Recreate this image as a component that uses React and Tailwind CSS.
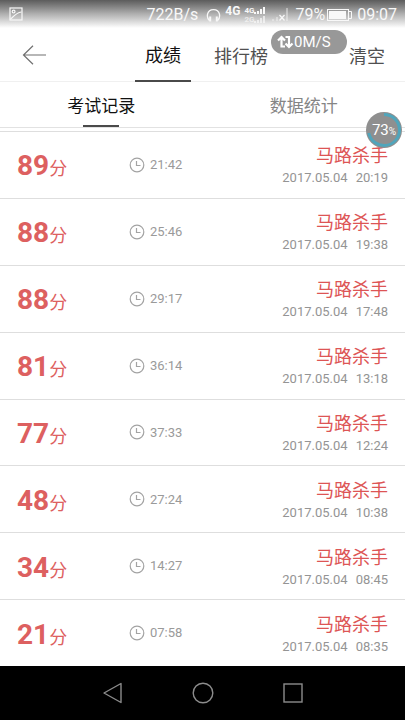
import React, { useState } from 'react';

const records = [
  { score: 89, duration: '21:42', date: '2017.05.04', time: '20:19' },
  { score: 88, duration: '25:46', date: '2017.05.04', time: '19:38' },
  { score: 88, duration: '29:17', date: '2017.05.04', time: '17:48' },
  { score: 81, duration: '36:14', date: '2017.05.04', time: '13:18' },
  { score: 77, duration: '37:33', date: '2017.05.04', time: '12:24' },
  { score: 48, duration: '27:24', date: '2017.05.04', time: '10:38' },
  { score: 34, duration: '14:27', date: '2017.05.04', time: '08:45' },
  { score: 21, duration: '07:58', date: '2017.05.04', time: '08:35' },
];

const PictureIcon = () => (
  <svg width="14" height="14" viewBox="0 0 14 14" fill="none" stroke="currentColor" strokeWidth="1.2">
    <rect x="1" y="1" width="12" height="12" />
    <circle cx="4.6" cy="4.6" r="1.4" />
    <path d="M1.5 12 C4 11 5.5 6 12.5 5" />
  </svg>
);

const HeadphoneIcon = () => (
  <svg width="15" height="15" viewBox="0 0 15 15" fill="none" stroke="currentColor" strokeWidth="1.3">
    <path d="M3.6 12.8 C0 9.5 0.6 1.6 7.5 1.6 C14.4 1.6 15 9.5 11.4 12.8" />
    <path d="M4.2 8.6 V13.4 M10.8 8.6 V13.4" strokeWidth="2" />
  </svg>
);

const SignalIcon = () => (
  <svg width="12" height="18" viewBox="0 0 12 18" fill="currentColor">
    <path d="M0 6h2v2H0zM3 5h2v3H3zM6 3h2v5H6zM9 1h2v7H9z" />
    <path d="M0 15h2v2H0zM3 14h2v3H3zM6 12h2v5H6zM9 10h2v7H9z" opacity="0.7" />
  </svg>
);

const NoSignalIcon = () => (
  <svg width="17" height="14" viewBox="0 0 17 14" fill="currentColor">
    <path d="M0 11h2v2H0zM4 9h2v4H4zM14 0h2v13h-2z" opacity="0.4" />
    <path d="M7.5 7 L12.5 12.5 M12.5 7 L7.5 12.5" stroke="currentColor" strokeWidth="1.3" />
  </svg>
);

const BatteryIcon = () => (
  <svg width="26" height="13" viewBox="0 0 26 13" fill="none" stroke="currentColor">
    <rect x="0.5" y="0.5" width="21" height="11" />
    <rect x="2" y="2" width="17" height="8" fill="currentColor" stroke="none" />
    <path d="M22 2.5 H24.5 V9.5 H22" />
  </svg>
);

const StatusBar = () => (
  <div className="flex h-7 items-center justify-between bg-linear-to-b from-[#5c5c5c] via-[#b0b0b0] to-white pr-2 pl-[9px] text-base text-[#f8f8f8]">
    <PictureIcon />
    <div className="flex items-center pt-[2px]">
      <span className="mr-2">722B/s</span>
      <HeadphoneIcon />
      <span className="ml-1 self-start pt-[2px] text-xs leading-3 font-bold">4G</span>
      <span className="ml-1 flex flex-col text-[8px] leading-[9px] font-bold">
        <span>4G</span>
        <span className="opacity-70">2G</span>
      </span>
      <SignalIcon />
      <span className="mr-[6px] ml-[6px]">
        <NoSignalIcon />
      </span>
      <span className="mr-[2px]">79%</span>
      <BatteryIcon />
      <span className="ml-1">09:07</span>
    </div>
  </div>
);

const ClockIcon = () => (
  <svg width="16" height="16" viewBox="0 0 16 16" fill="none" stroke="#a3a3a3" strokeWidth="1.2">
    <circle cx="8" cy="8" r="6.8" />
    <path d="M7.5 4 V8.5 H11.5" />
  </svg>
);

const Header = () => (
  <header className="flex h-[54px] items-stretch justify-between border-b border-[#f0f0f0] pr-5 text-lg text-[#505050]">
    <button aria-label="返回" className="w-16 pl-[22px]">
      <svg width="25" height="20" viewBox="0 0 25 20" fill="none" stroke="#707070" strokeWidth="1.2">
        <path d="M24 10 H1.5 M11 0.8 L1.5 10 L11 19.2" />
      </svg>
    </button>
    <nav className="flex gap-[13px]">
      <button className="-mb-px border-b-2 border-[#4a4a4a] px-[10px] pt-1 text-[#111]">成绩</button>
      <button className="px-[10px] pt-1">排行榜</button>
    </nav>
    <button className="pt-1">清空</button>
  </header>
);

const SubTabs = ({ active, onChange }) => (
  <div className="grid h-[46px] grid-cols-2 border-b border-[#e2e2e2] text-[17px]">
    {['考试记录', '数据统计'].map((label, index) => (
      <button
        key={label}
        onClick={() => onChange(index)}
        className={`flex flex-col items-center justify-between ${
          active === index ? 'text-[#111]' : 'text-[#858585]'
        }`}
      >
        <span className="pt-3 leading-6">{label}</span>
        <span className={`h-[2px] w-9 ${active === index ? 'bg-[#4a4a4a]' : ''}`} />
      </button>
    ))}
  </div>
);

const RecordRow = ({ record }) => (
  <li className="grid min-h-[66px] flex-1 grid-cols-[112px_1fr_auto] items-center border-t border-[#dedede] px-[17px]">
    <p className="flex items-baseline pt-1 text-lg text-[#dd6060]">
      <span className="text-[28px] leading-8 font-bold">{record.score}</span>
      <span>分</span>
    </p>
    <p className="flex items-center gap-[5px] text-[13px] text-[#9a9a9a]">
      <ClockIcon />
      {record.duration}
    </p>
    <div className="pt-[3px] text-right">
      <p className="text-lg leading-6 text-[#dd5555]">马路杀手</p>
      <p className="flex justify-end gap-2 text-[13px] leading-5 text-[#949494]">
        <span>{record.date}</span>
        <span>{record.time}</span>
      </p>
    </div>
  </li>
);

const SpeedBadge = () => (
  <div className="absolute top-[30px] right-[58px] flex h-6 w-[76px] items-center rounded-full bg-[#989898] pl-[6px] text-[15px] text-white">
    <svg width="17" height="14" viewBox="0 0 17 14" fill="none" stroke="currentColor" strokeWidth="2.2">
      <path d="M1 5.5 L4.5 2 L8 5.5 M4.5 2 V11.5 H8" />
      <path d="M8.5 2 H12 V12 M8.5 8.5 L12 12 L15.5 8.5" />
    </svg>
    0M/S
  </div>
);

const MemoryBadge = () => (
  <div className="absolute top-28 right-[3px] flex h-9 w-9 items-center justify-center rounded-full bg-[#8f8f8f] text-white">
    <svg className="absolute inset-0" width="36" height="36" viewBox="0 0 36 36" fill="none">
      <path d="M18 2.5 A15.5 15.5 0 1 1 2.8 21" stroke="#50a5bb" strokeWidth="3" />
    </svg>
    <span className="relative text-[15px]">
      73<span className="text-[10px]">%</span>
    </span>
  </div>
);

const NavBar = () => (
  <nav className="flex h-[54px] items-center justify-center gap-[66px] bg-black">
    <button aria-label="返回键">
      <svg width="24" height="24" viewBox="0 0 24 24" fill="none" stroke="#8c8c8c" strokeWidth="1.4">
        <path d="M20 2.5 V21.5 L3 12 Z" strokeLinejoin="round" />
      </svg>
    </button>
    <button aria-label="主屏幕">
      <svg width="24" height="24" viewBox="0 0 24 24" fill="none" stroke="#8c8c8c" strokeWidth="1.4">
        <circle cx="12" cy="12" r="9.8" />
      </svg>
    </button>
    <button aria-label="最近任务">
      <svg width="24" height="24" viewBox="0 0 24 24" fill="none" stroke="#8c8c8c" strokeWidth="1.4">
        <rect x="3" y="3" width="18" height="18" />
      </svg>
    </button>
  </nav>
);

const App = () => {
  const [tab, setTab] = useState(0);

  return (
    <div className="relative flex min-h-screen flex-col bg-white font-[Roboto,'Noto_Sans_CJK_SC',sans-serif]">
      <StatusBar />
      <Header />
      <SubTabs active={tab} onChange={setTab} />
      <ul className="flex flex-1 flex-col pt-[3px]">
        {records.map((record) => (
          <RecordRow key={record.time} record={record} />
        ))}
      </ul>
      <NavBar />
      <SpeedBadge />
      <MemoryBadge />
    </div>
  );
};

export default App;
